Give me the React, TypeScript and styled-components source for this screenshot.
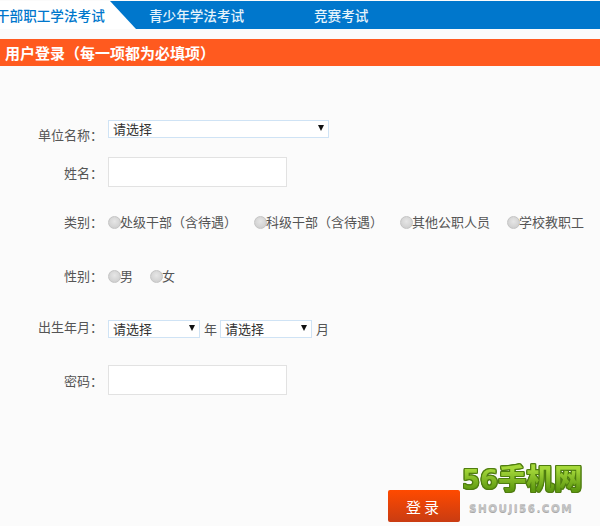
import React from "react";
import styled, { createGlobalStyle } from "styled-components";

const GlobalStyle = createGlobalStyle`
  html, body {
    margin: 0;
    background: #fbfbfb;
    overflow: hidden;
  }
  body {
    font-family: "Noto Sans CJK SC", "Liberation Sans", sans-serif;
  }
`;

const Page = styled.div`
  position: relative;
  width: 600px;
  height: 526px;
  overflow: hidden;
`;

const TabBar = styled.div`
  display: flex;
  height: 28px;
  margin-top: 1px;
  background: #0077cc;
`;

const ActiveTab = styled.div`
  width: 136px;
  height: 28px;
  line-height: 28px;
  font-size: 13.6px;
  font-weight: 500;
  color: #0077cc;
  background: #fff;
  white-space: nowrap;
  overflow: hidden;
  clip-path: polygon(0 0, 110px 0, 136px 100%, 0 100%);
  span {
    margin-left: -4px;
  }
`;

const Tab = styled.div<{ $width: number }>`
  width: ${(p) => p.$width}px;
  padding-left: 13px;
  box-sizing: border-box;
  line-height: 28px;
  font-size: 13.6px;
  font-weight: 500;
  color: #e6f3fb;
`;

const Banner = styled.div`
  height: 27px;
  margin-top: 10px;
  padding-left: 5px;
  line-height: 27px;
  font-size: 15px;
  font-weight: 700;
  color: #fff;
  background: #ff5a1f;
`;

const Form = styled.form`
  display: flex;
  flex-direction: column;
`;

const Row = styled.div<{ $top: number }>`
  display: flex;
  align-items: flex-start;
  margin-top: ${(p) => p.$top}px;
`;

const Label = styled.label<{ $drop: number }>`
  width: 108px;
  flex: none;
  box-sizing: border-box;
  padding-right: 5px;
  margin-top: ${(p) => p.$drop}px;
  text-align: right;
  font-size: 13px;
  line-height: 20px;
  color: #555;
`;

const SelectWrap = styled.div<{ $width: number }>`
  position: relative;
  width: ${(p) => p.$width}px;
  height: 18px;
  flex: none;
  &::after {
    content: "";
    position: absolute;
    top: 5px;
    right: 5px;
    border-left: 3.5px solid transparent;
    border-right: 3.5px solid transparent;
    border-top: 6px solid #111;
  }
`;

const Select = styled.select`
  display: block;
  width: 100%;
  height: 18px;
  padding: 0 0 0 4px;
  box-sizing: border-box;
  appearance: none;
  border: 1px solid #cfe3f5;
  border-radius: 0;
  background: #fff;
  font-family: inherit;
  font-size: 13px;
  line-height: 16px;
  color: #333;
`;

const TextInput = styled.input`
  display: block;
  width: 179px;
  height: 30px;
  box-sizing: border-box;
  border: 1px solid #e2e2e2;
  background: #fff;
`;

const Options = styled.div`
  display: flex;
  gap: 17px;
  height: 20px;
  align-items: center;
`;

const Option = styled.label`
  display: flex;
  align-items: center;
  font-size: 13px;
  line-height: 20px;
  color: #555;
  white-space: nowrap;
`;

const Radio = styled.input`
  appearance: none;
  width: 13px;
  height: 13px;
  margin: 0 -1px 0 0;
  border: 1px solid #c4c4c4;
  border-radius: 50%;
  background: radial-gradient(circle at 50% 40%, #e6e6e6, #c9c9c9);
  flex: none;
`;

const Unit = styled.span`
  padding: 0 3px 0 4px;
  font-size: 13px;
  line-height: 18px;
  color: #555;
`;

const SubmitButton = styled.button`
  width: 72px;
  height: 32px;
  margin-top: 95px;
  margin-left: 388px;
  padding: 0;
  border: 0;
  border-radius: 2px;
  background: linear-gradient(#ff4a00, #c93c12);
  font-family: inherit;
  font-size: 15px;
  letter-spacing: 3px;
  color: #fff;
`;

const Watermark = styled.div`
  position: absolute;
  left: 462px;
  top: 460px;
  width: 124px;
`;

const WatermarkLogo = styled.div`
  font-size: 28px;
  line-height: 34px;
  font-weight: 900;
  white-space: nowrap;
  color: transparent;
  background: linear-gradient(#a5d83a 25%, #5f9a10 80%);
  -webkit-background-clip: text;
  background-clip: text;
  filter: drop-shadow(1px 0 0 #4f7d10) drop-shadow(-1px 0 0 #4f7d10) drop-shadow(0 1px 0 #4f7d10)
    drop-shadow(0 -1px 0 #4f7d10);
  b {
    font-family: "DejaVu Sans", sans-serif;
    font-size: 26px;
    letter-spacing: 0;
  }
`;

const WatermarkSite = styled.div`
  margin: 5px 0 0 7px;
  font-family: "DejaVu Sans", sans-serif;
  font-size: 10.5px;
  font-weight: 700;
  line-height: 12px;
  letter-spacing: 1.4px;
  color: #c4c4c4;
  text-shadow: 0 1px 0 #a8a8a8;
  white-space: nowrap;
`;

const categories = ["处级干部（含待遇）", "科级干部（含待遇）", "其他公职人员", "学校教职工"];
const genders = ["男", "女"];

function Choice({ name, items }: { name: string; items: string[] }) {
  return (
    <Options>
      {items.map((item) => (
        <Option key={item}>
          <Radio type="radio" name={name} />
          {item}
        </Option>
      ))}
    </Options>
  );
}

function Picker({ width }: { width: number }) {
  return (
    <SelectWrap $width={width}>
      <Select>
        <option>请选择</option>
      </Select>
    </SelectWrap>
  );
}

export default function App() {
  return (
    <Page>
      <GlobalStyle />
      <TabBar>
        <ActiveTab>
          <span>干部职工学法考试</span>
        </ActiveTab>
        <Tab $width={165}>青少年学法考试</Tab>
        <Tab $width={120}>竞赛考试</Tab>
      </TabBar>
      <Banner>用户登录（每一项都为必填项）</Banner>
      <Form>
        <Row $top={54}>
          <Label $drop={5}>单位名称：</Label>
          <Picker width={221} />
        </Row>
        <Row $top={12}>
          <Label $drop={6}>姓名：</Label>
          <TextInput type="text" />
        </Row>
        <Row $top={25}>
          <Label $drop={0}>类别：</Label>
          <Choice name="category" items={categories} />
        </Row>
        <Row $top={34}>
          <Label $drop={0}>性别：</Label>
          <Choice name="gender" items={genders} />
        </Row>
        <Row $top={34}>
          <Label $drop={-3}>出生年月：</Label>
          <Picker width={92} />
          <Unit>年</Unit>
          <Picker width={92} />
          <Unit>月</Unit>
        </Row>
        <Row $top={27}>
          <Label $drop={6}>密码：</Label>
          <TextInput type="password" />
        </Row>
        <SubmitButton type="button">登录</SubmitButton>
      </Form>
      <Watermark>
        <WatermarkLogo>
          <b>56</b>手机网
        </WatermarkLogo>
        <WatermarkSite>SHOUJI56.COM</WatermarkSite>
      </Watermark>
    </Page>
  );
}
